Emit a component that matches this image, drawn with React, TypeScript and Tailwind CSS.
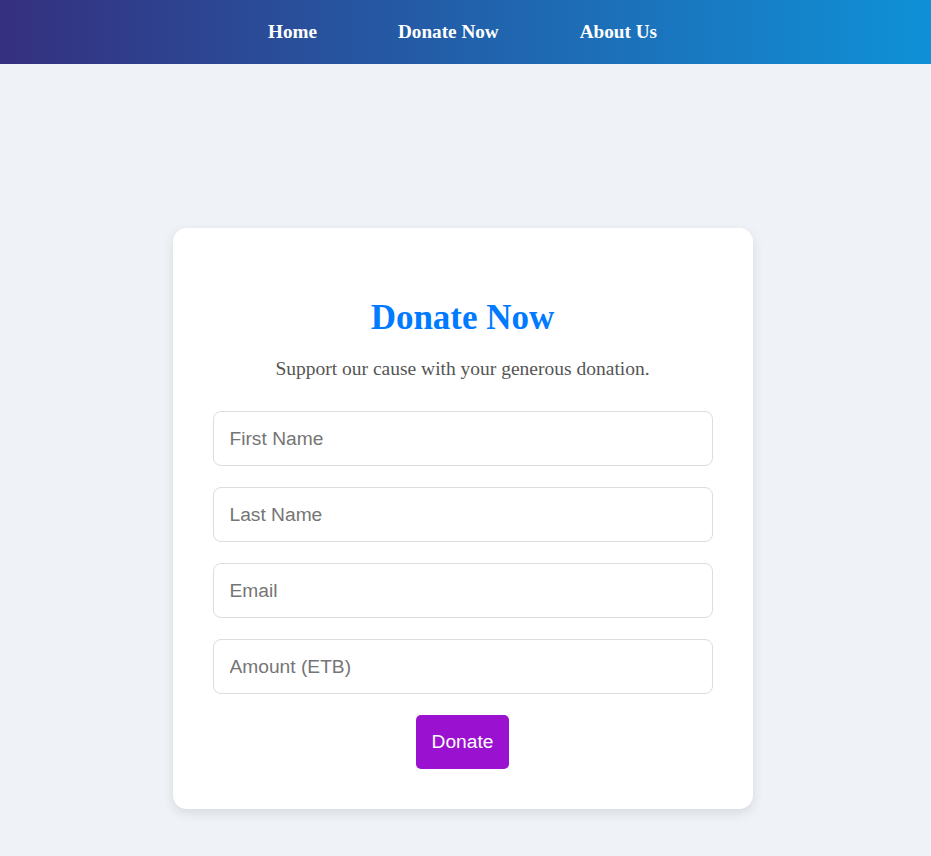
import React from "react";

export default function App() {
  const fields = ["First Name", "Last Name", "Email", "Amount (ETB)"];
  return (
    <div className="min-h-screen bg-[#eff3f8] pb-[48px]">
      <nav className="h-[64px] flex items-center justify-center gap-[81px] bg-[linear-gradient(to_right,#35307f,#0f91d7)] pr-[6px]">
        {["Home", "Donate Now", "About Us"].map((t) => (
          <a
            key={t}
            href="#"
            className="text-white font-bold text-[19.2px] [font-family:'Liberation_Serif',serif] no-underline"
          >
            {t}
          </a>
        ))}
      </nav>
      <div className="flex justify-center mt-[164px] pr-[6px]">
        <div className="w-[580px] bg-white rounded-[14px] shadow-[0_4px_12px_rgba(0,0,0,0.1)] p-[40px] flex flex-col items-center">
          <h1 className="mt-[30px] text-[35px] leading-[40px] font-bold text-[#007bff] [font-family:'Liberation_Serif',serif]">
            Donate Now
          </h1>
          <p className="mt-[20px] text-[19.5px] leading-[22px] text-[#555] [font-family:'Liberation_Serif',serif]">
            Support our cause with your generous donation.
          </p>
          <form className="mt-[31px] w-full flex flex-col items-center gap-[21px]" onSubmit={(e) => e.preventDefault()}>
            {fields.map((f) => (
              <input
                key={f}
                placeholder={f}
                className="w-full h-[55px] px-[16px] border border-[#ddd] rounded-[8px] text-[19.2px] [font-family:'Liberation_Sans',Arial,sans-serif] placeholder:text-[#757575] outline-none"
              />
            ))}
            <button
              type="submit"
              className="h-[54px] px-[16px] bg-[#9a11d0] text-white rounded-[5px] text-[19.2px] [font-family:'Liberation_Sans',Arial,sans-serif]"
            >
              Donate
            </button>
          </form>
        </div>
      </div>
    </div>
  );
}
